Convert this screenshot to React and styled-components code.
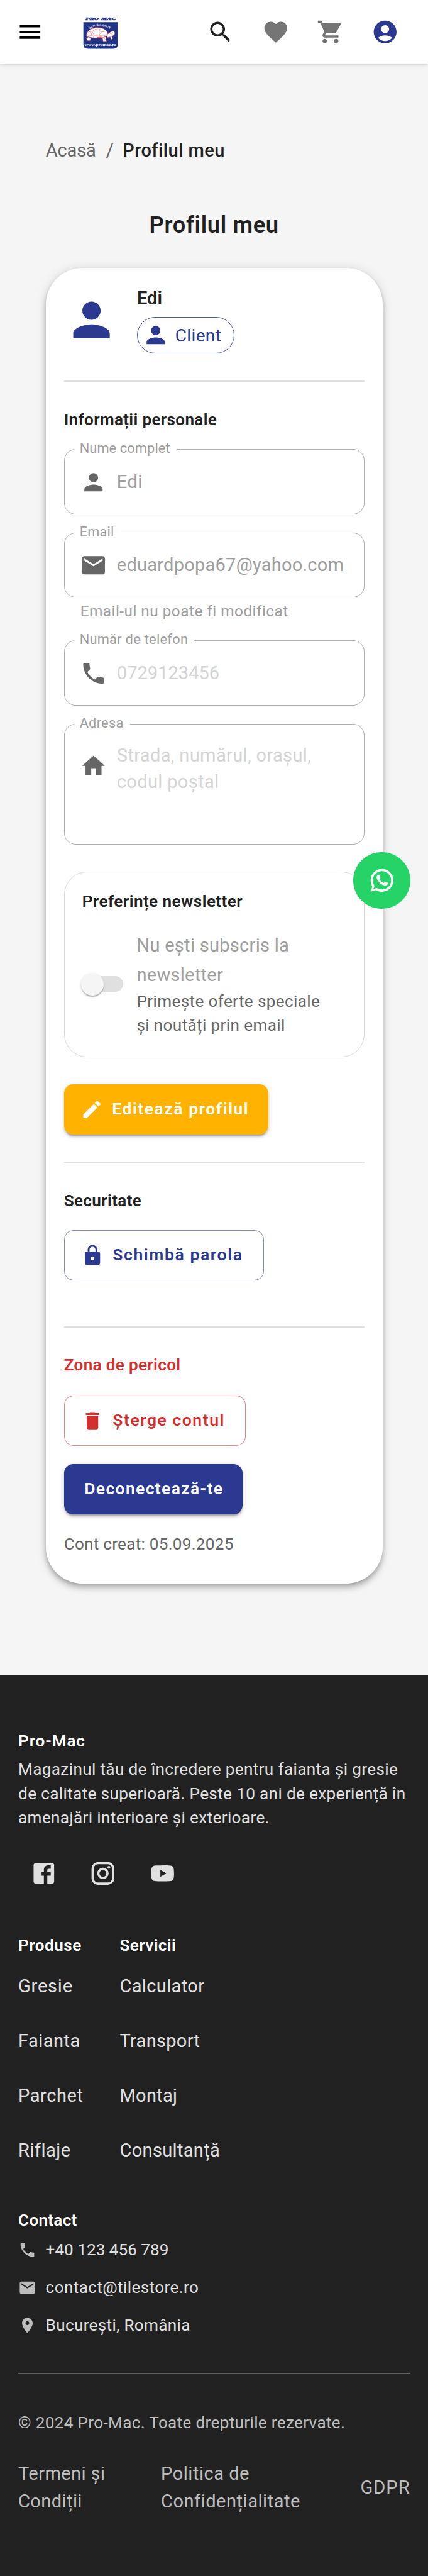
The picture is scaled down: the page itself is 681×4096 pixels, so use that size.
import React from "react";
import styled, { createGlobalStyle } from "styled-components";

/* 1rem = 10 design pixels */
const Global = createGlobalStyle`
  html { font-size: 18.158px; }
  body { margin: 0; background: #f5f5f5; font-family: Roboto, "Liberation Sans", sans-serif; font-weight: 450; }
  *, *::before, *::after { box-sizing: border-box; }
`;

const colors = {
  primary: "#2b3990",
  accent: "#ffb300",
  danger: "#d32f2f",
  text: "#212121",
  muted: "#666666",
  disabled: "#9e9e9e",
  line: "#e0e0e0",
};

const Page = styled.div`
  position: relative;
  width: 100%;
  height: 225.6rem;
  overflow: hidden;
  background: #f5f5f5;
  color: ${colors.text};
`;

const Svg = styled.svg`
  display: block;
  flex: none;
  width: ${(p) => p.$size / 10}rem;
  height: ${(p) => p.$size / 10}rem;
  fill: ${(p) => p.$color || "currentColor"};
`;

const paths = {
  menu: "M3 18h18v-2H3zm0-5h18v-2H3zm0-7v2h18V6z",
  search:
    "M15.5 14h-.79l-.28-.27C15.41 12.59 16 11.11 16 9.5 16 5.91 13.09 3 9.5 3S3 5.91 3 9.5 5.91 16 9.5 16c1.61 0 3.09-.59 4.23-1.57l.27.28v.79l5 4.99L20.49 19zm-6 0C7.01 14 5 11.99 5 9.5S7.01 5 9.5 5 14 7.01 14 9.5 11.99 14 9.5 14",
  heart:
    "m12 21.35-1.45-1.32C5.4 15.36 2 12.28 2 8.5 2 5.42 4.42 3 7.5 3c1.74 0 3.41.81 4.5 2.09C13.09 3.81 14.76 3 16.5 3 19.58 3 22 5.42 22 8.5c0 3.78-3.4 6.86-8.55 11.54z",
  cart:
    "M7 18c-1.1 0-1.99.9-1.99 2S5.9 22 7 22s2-.9 2-2-.9-2-2-2M1 2v2h2l3.6 7.59-1.35 2.45c-.16.28-.25.61-.25.96 0 1.1.9 2 2 2h12v-2H7.42c-.14 0-.25-.11-.25-.25l.03-.12.9-1.63h7.45c.75 0 1.41-.41 1.75-1.03l3.58-6.49c.08-.14.12-.31.12-.48 0-.55-.45-1-1-1H5.21l-.94-2zm16 16c-1.1 0-1.99.9-1.99 2s.89 2 1.99 2 2-.9 2-2-.9-2-2-2",
  account:
    "M12 2C6.48 2 2 6.48 2 12s4.48 10 10 10 10-4.48 10-10S17.52 2 12 2m0 4c1.93 0 3.5 1.57 3.5 3.5S13.93 13 12 13s-3.5-1.57-3.5-3.5S10.07 6 12 6m0 14c-2.03 0-4.43-.82-6.14-2.88C7.55 15.8 9.68 15 12 15s4.45.8 6.14 2.12C16.43 19.18 14.03 20 12 20",
  person:
    "M12 12c2.21 0 4-1.79 4-4s-1.79-4-4-4-4 1.79-4 4 1.79 4 4 4m0 2c-2.67 0-8 1.34-8 4v2h16v-2c0-2.66-5.33-4-8-4",
  mail:
    "M20 4H4c-1.1 0-1.99.9-1.99 2L2 18c0 1.1.9 2 2 2h16c1.1 0 2-.9 2-2V6c0-1.1-.9-2-2-2m0 4-8 5-8-5V6l8 5 8-5z",
  phone:
    "M6.62 10.79c1.44 2.83 3.76 5.14 6.59 6.59l2.2-2.2c.27-.27.67-.36 1.02-.24 1.12.37 2.33.57 3.57.57.55 0 1 .45 1 1V20c0 .55-.45 1-1 1-9.39 0-17-7.61-17-17 0-.55.45-1 1-1h3.5c.55 0 1 .45 1 1 0 1.25.2 2.45.57 3.57.11.35.03.74-.25 1.02z",
  home: "M10 20v-6h4v6h5v-8h3L12 3 2 12h3v8z",
  edit:
    "M3 17.25V21h3.75L17.81 9.94l-3.75-3.75zM20.71 7.04c.39-.39.39-1.02 0-1.41l-2.34-2.34a.996.996 0 0 0-1.41 0l-1.83 1.83 3.75 3.75z",
  lock:
    "M18 8h-1V6c0-2.76-2.24-5-5-5S7 3.24 7 6v2H6c-1.1 0-2 .9-2 2v10c0 1.1.9 2 2 2h12c1.1 0 2-.9 2-2V10c0-1.1-.9-2-2-2m-6 9c-1.1 0-2-.9-2-2s.9-2 2-2 2 .9 2 2-.9 2-2 2m3.1-9H8.9V6c0-1.71 1.39-3.1 3.1-3.1s3.1 1.39 3.1 3.1z",
  trash: "M6 19c0 1.1.9 2 2 2h8c1.1 0 2-.9 2-2V7H6zM19 4h-3.5l-1-1h-5l-1 1H5v2h14z",
  pin:
    "M12 2C8.13 2 5 5.13 5 9c0 5.25 7 13 7 13s7-7.75 7-13c0-3.87-3.13-7-7-7m0 9.5c-1.38 0-2.5-1.12-2.5-2.5s1.12-2.5 2.5-2.5 2.5 1.12 2.5 2.5-1.12 2.5-2.5 2.5",
  facebook:
    "M5 3h14a2 2 0 0 1 2 2v14a2 2 0 0 1-2 2H5a2 2 0 0 1-2-2V5a2 2 0 0 1 2-2m13 2h-2.5A3.5 3.5 0 0 0 12 8.5V11h-2v3h2v7h3v-7h3v-3h-3V9a1 1 0 0 1 1-1h2V5z",
  instagram:
    "M7.8 2h8.4C19.4 2 22 4.6 22 7.8v8.4a5.8 5.8 0 0 1-5.8 5.8H7.8C4.6 22 2 19.4 2 16.2V7.8A5.8 5.8 0 0 1 7.8 2m-.2 2A3.6 3.6 0 0 0 4 7.6v8.8C4 18.39 5.61 20 7.6 20h8.8a3.6 3.6 0 0 0 3.6-3.6V7.6C20 5.61 18.39 4 16.4 4H7.6m9.65 1.5a1.25 1.25 0 0 1 1.25 1.25A1.25 1.25 0 0 1 17.25 8 1.25 1.25 0 0 1 16 6.75a1.25 1.25 0 0 1 1.25-1.25M12 7a5 5 0 0 1 5 5 5 5 0 0 1-5 5 5 5 0 0 1-5-5 5 5 0 0 1 5-5m0 2a3 3 0 0 0-3 3 3 3 0 0 0 3 3 3 3 0 0 0 3-3 3 3 0 0 0-3-3z",
  youtube:
    "M10 15l5.19-3L10 9v6m11.56-7.83c.13.47.22 1.1.28 1.9.07.8.1 1.49.1 2.09L22 12c0 2.19-.16 3.8-.44 4.83-.25.9-.83 1.48-1.73 1.73-.47.13-1.33.22-2.65.28-1.3.07-2.49.1-3.59.1L12 19c-4.19 0-6.8-.16-7.83-.44-.9-.25-1.48-.83-1.73-1.73-.13-.47-.22-1.1-.28-1.9-.07-.8-.1-1.49-.1-2.09L2 12c0-2.19.16-3.8.44-4.83.25-.9.83-1.48 1.73-1.73.47-.13 1.33-.22 2.65-.28 1.3-.07 2.49-.1 3.59-.1L12 5c4.19 0 6.8.16 7.83.44.9.25 1.48.83 1.73 1.73z",
  whatsapp:
    "M16.75 13.96c.25.13.41.2.46.3.06.11.04.61-.21 1.18-.2.56-1.24 1.1-1.7 1.12-.46.02-.47.36-2.96-.73-2.49-1.09-3.99-3.75-4.11-3.92-.12-.17-.96-1.38-.92-2.61.05-1.22.69-1.8.95-2.04.24-.26.51-.29.68-.26h.47c.15 0 .36-.06.55.45l.69 1.87c.06.13.1.28.01.44l-.27.41-.39.42c-.12.12-.26.25-.12.5.12.26.62 1.09 1.32 1.78.91.88 1.71 1.17 1.95 1.3.24.14.39.12.54-.04l.81-.94c.19-.25.35-.19.58-.11l1.67.88M12 2a10 10 0 0 1 10 10 10 10 0 0 1-10 10c-1.97 0-3.8-.57-5.35-1.55L2 22l1.55-4.65A9.969 9.969 0 0 1 2 12 10 10 0 0 1 12 2m0 2a8 8 0 0 0-8 8c0 1.72.54 3.31 1.46 4.61L4.5 19.5l2.89-.96A7.95 7.95 0 0 0 12 20a8 8 0 0 0 8-8 8 8 0 0 0-8-8z",
};

const Icon = ({ name, size = 24, color }) => (
  <Svg viewBox="0 0 24 24" $size={size} $color={color} aria-hidden="true">
    <path d={paths[name]} fillRule="evenodd" />
  </Svg>
);

/* tracking is given in design pixels */
const Tracked = styled.span`
  letter-spacing: ${(p) => (p.$ls || 0) / 10}rem;
`;

const Header = styled.header`
  position: relative;
  display: flex;
  align-items: center;
  height: 5.6rem;
  padding: 0 2.54rem 0 1.42rem;
  background: #fff;
  box-shadow: 0 0.1rem 0.3rem rgba(0, 0, 0, 0.14);
`;
const LogoImage = styled.svg`
  display: block;
  width: 3.103rem;
  height: 2.836rem;
  margin: 0.25rem 0 0 3.45rem;
`;
const HeaderActions = styled.div`
  display: flex;
  gap: 2.41rem;
  margin-left: auto;
`;

const Logo = () => (
  <LogoImage viewBox="60 36 256 234" role="img" aria-label="Pro-Mac">
    <text x="78" y="60" fontFamily="Liberation Serif, serif" fontStyle="italic" fontWeight="700" fontSize="29" textLength="220" lengthAdjust="spacingAndGlyphs" fill="#1f3487" stroke="#1f3487" strokeWidth="2">
      PRO-MAC
    </text>
    <path d="M63 73h249v160q0 33-33 33H96q-33 0-33-33z" fill="#1f3487" />
    <path id="motto" d="M110 124C135 98 195 82 262 126" fill="none" />
    <text fontFamily="Liberation Serif, serif" fontWeight="700" fontSize="22" fill="#fff">
      <textPath href="#motto" textLength="156" lengthAdjust="spacingAndGlyphs">Încet, dar sigur!®</textPath>
    </text>
    <g fill="#fff" stroke="#ee4a52" strokeWidth="2.6" strokeLinejoin="round">
      <path d="M100 180l-14 12 8 15h17l5-18zM200 182l6 30h24l-6-14 4-18zM252 172l14 26 8-4-8-28z" />
      <path d="M236 160c14-2 20-22 42-21 14 1 16 16 8 25-12 13-32 18-50 20z" />
      <path d="M86 168c4-32 32-56 76-56 42 0 72 18 78 46 0 12-16 22-38 26-36 5-66 5-90-1-16-3-26-5-26-15z" />
      <path d="M88 162c24 12 108 22 148 0M124 122l-12 18 14 28M112 140l-22 16M152 112l-28 11M126 140l22-14 30 2 14 18-16 20-36 2zM192 146l34-8M178 128l16-12M176 166l22 14M140 168l-6 16M112 140h14" fill="none" />
      <path d="M160 184l30-4 6 10-22-2zM104 192l8-6M210 190l10 6M256 156l14 2" fill="#ee4a52" />
    </g>
    <circle cx="274" cy="150" r="3" fill="#333" />
    <text x="73" y="247" fontFamily="Liberation Serif, serif" fontWeight="700" fontSize="27" textLength="228" lengthAdjust="spacingAndGlyphs" fill="#fff">
      www.promac.ro
    </text>
  </LogoImage>
);

const Main = styled.main`
  height: 141.11rem;
  padding: 6.43rem 3.98rem 0 4rem;
`;
const Breadcrumbs = styled.nav`
  display: flex;
  font-size: 1.6rem;
  line-height: 2.4rem;
  color: ${colors.muted};
`;
const Crumb = styled.span`
  letter-spacing: ${(p) => (p.$current ? 0.022 : -0.007)}rem;
  color: ${(p) => (p.$current ? colors.text : "inherit")};
  font-weight: ${(p) => (p.$current ? 500 : 450)};
`;
const Slash = styled.span`
  margin: 0 0.8rem 0 0.88rem;
`;
const PageTitle = styled.h1`
  margin: 3.67rem 0 2.15rem;
  text-align: center;
  font-size: 2rem;
  line-height: 3.2rem;
  font-weight: 650;
  letter-spacing: 0.037rem;
`;
const Card = styled.section`
  width: 29.52rem;
  height: 115.25rem;
  padding: 1.6rem;
  border-radius: 3.2rem;
  background: #fff;
  box-shadow:
    0 0.2rem 0.4rem -0.1rem rgba(0, 0, 0, 0.2),
    0 0.4rem 0.5rem 0 rgba(0, 0, 0, 0.14),
    0 0.1rem 1rem 0 rgba(0, 0, 0, 0.12);
`;
const ProfileHead = styled.div`
  display: flex;
  align-items: center;
  gap: 1.6rem;
  height: 5.92rem;
`;
const Name = styled.div`
  font-size: 1.6rem;
  line-height: 2.1rem;
  font-weight: 600;
  letter-spacing: 0.006rem;
  margin-bottom: 0.61rem;
`;
const Chip = styled.div`
  display: flex;
  align-items: center;
  width: 8.55rem;
  height: 3.21rem;
  padding-left: 0.4rem;
  gap: 0.5rem;
  border: 0.1rem solid rgba(43, 57, 144, 0.85);
  border-radius: 1.6rem;
  color: ${colors.primary};
  font-size: 1.54rem;
  letter-spacing: 0.02rem;
`;
const Divider = styled.hr`
  height: 0.1rem;
  margin: ${(p) => p.$top / 10}rem 0 0;
  border: 0;
  background: ${(p) => p.$color || colors.line};
`;
const SectionTitle = styled.h2`
  margin: ${(p) => (p.$top ?? 22.3) / 10}rem 0 0;
  font-size: 1.44rem;
  line-height: 2.2rem;
  font-weight: 600;
  color: ${(p) => p.$color || "inherit"};
  letter-spacing: ${(p) => (p.$ls ?? 0.18) / 10}rem;
`;
const Fields = styled.div`
  display: flex;
  flex-direction: column;
  gap: 1.6rem;
  margin-top: 1.47rem;
`;
const InputBox = styled.div`
  position: relative;
  display: flex;
  align-items: ${(p) => (p.$multiline ? "flex-start" : "center")};
  gap: 0.84rem;
  height: ${(p) => (p.$multiline ? 10.57 : 5.7)}rem;
  padding: ${(p) => (p.$multiline ? "1.6rem 1.34rem" : "0.06rem 1.34rem 0")};
  border: 0.1rem solid #acacac;
  border-radius: 1rem;
  color: #666;
`;
const FieldLabel = styled.label`
  position: absolute;
  top: -0.95rem;
  left: 0.82rem;
  padding: 0 0.56rem 0 0.5rem;
  background: #fff;
  color: ${colors.disabled};
  font-size: 1.2rem;
  line-height: 1.7rem;
`;
const FieldValue = styled.div`
  font-size: 1.6rem;
  line-height: 2.3rem;
  color: ${(p) => (p.$placeholder ? "#d4d4d4" : colors.disabled)};
  letter-spacing: ${(p) => p.$ls / 10}rem;
  white-space: pre-line;
`;
const AddressIcon = styled.div`
  padding-top: 0.83rem;
`;
const Helper = styled.div`
  margin: 0.25rem 1.43rem 0;
  padding-bottom: 0.05rem;
  font-size: 1.34rem;
  line-height: 1.84rem;
  letter-spacing: 0.027rem;
  color: ${colors.disabled};
  white-space: nowrap;
`;

const Field = ({ label, labelLs, icon, value, placeholder, ls, helper, multiline }) => (
  <div>
    <InputBox $multiline={multiline}>
      <FieldLabel>
        <Tracked $ls={labelLs}>{label}</Tracked>
      </FieldLabel>
      {multiline ? (
        <AddressIcon>
          <Icon name={icon} />
        </AddressIcon>
      ) : (
        <Icon name={icon} />
      )}
      <FieldValue $placeholder={!value} $ls={ls}>
        {value || placeholder}
      </FieldValue>
    </InputBox>
    {helper && <Helper>{helper}</Helper>}
  </div>
);

const NewsletterBox = styled.div`
  height: 16.25rem;
  margin-top: 2.36rem;
  padding: 1.54rem;
  border: 0.1rem solid #d8d8d8;
  border-radius: 2rem;
`;
const SwitchRow = styled.div`
  display: flex;
  align-items: center;
  margin-top: 1.4rem;
`;
const Track = styled.div`
  display: flex;
  align-items: center;
  width: 3.4rem;
  height: 1.36rem;
  margin: 0 1.18rem 0 0.2rem;
  border-radius: 0.7rem;
  background: ${colors.line};
`;
const Thumb = styled.div`
  flex: none;
  width: 2rem;
  height: 2rem;
  margin-left: -0.3rem;
  border-radius: 50%;
  background: #f5f5f5;
  box-shadow:
    0 0.2rem 0.1rem -0.1rem rgba(0, 0, 0, 0.2),
    0 0.1rem 0.1rem 0 rgba(0, 0, 0, 0.14),
    0 0.1rem 0.3rem 0 rgba(0, 0, 0, 0.12);
`;
const SwitchTitle = styled.div`
  font-size: 1.6rem;
  line-height: 2.57rem;
  letter-spacing: 0.015rem;
  color: ${colors.disabled};
`;
const SwitchNote = styled.div`
  font-size: 1.44rem;
  line-height: 2.11rem;
  letter-spacing: 0.02rem;
  color: ${colors.muted};
`;

const buttonLooks = {
  accent: `background:${colors.accent};color:#fff;`,
  primary: `background:${colors.primary};color:#fff;`,
  outlined: `color:${colors.primary};border:0.1rem solid rgba(43,57,144,.6);`,
  danger: `color:${colors.danger};border:0.1rem solid rgba(211,47,47,.6);`,
};
const Button = styled.button`
  display: flex;
  align-items: center;
  gap: 0.78rem;
  width: ${(p) => p.$width / 10}rem;
  height: 4.4rem;
  margin: ${(p) => p.$top / 10}rem 0 0;
  padding: 0 0 0 ${(p) => p.$pad / 10}rem;
  border: 0;
  border-radius: 0.8rem;
  background: transparent;
  font: 600 1.46rem/2.4rem Roboto, sans-serif;
  letter-spacing: ${(p) => p.$ls / 10}rem;
  white-space: nowrap;
  ${(p) => buttonLooks[p.$look]}
  ${(p) =>
    (p.$look === "accent" || p.$look === "primary") &&
    `box-shadow: 0 0.3rem 0.1rem -0.2rem rgba(0,0,0,.2), 0 0.2rem 0.2rem 0 rgba(0,0,0,.14), 0 0.1rem 0.5rem 0 rgba(0,0,0,.12);`}
`;
const ButtonLabel = styled.span`
  padding-bottom: 0.1rem;
`;
const Created = styled.div`
  margin-top: 1.58rem;
  font-size: 1.44rem;
  line-height: 2.1rem;
  letter-spacing: 0.014rem;
  color: ${colors.muted};
`;

const Fab = styled.a`
  position: absolute;
  top: 74.63rem;
  right: 1.57rem;
  display: grid;
  place-items: center;
  width: 4.97rem;
  height: 4.97rem;
  border-radius: 50%;
  background: #25d366;
  color: #fff;
`;

const Footer = styled.footer`
  height: 78.89rem;
  padding: 4.66rem 1.56rem 0 1.6rem;
  background: #212121;
  color: #e0e0e0;
`;
const Description = styled.p`
  margin: 0.33rem -1rem 0 0;
  padding-right: 0.8rem;
  font-size: 1.44rem;
  line-height: 2.106rem;
  letter-spacing: 0.0195rem;
`;
const Socials = styled.div`
  display: flex;
  gap: 2.8rem;
  padding: 2.64rem 0 0 1.04rem;
`;
const LinkColumns = styled.div`
  display: flex;
  margin-top: 4.02rem;
`;
const LinkColumn = styled.div`
  width: ${(p) => p.$width / 10}rem;
`;
const FooterLink = styled.a`
  display: block;
  font-size: 1.6rem;
  line-height: 4.8rem;
  letter-spacing: ${(p) => p.$ls / 10}rem;

  &:first-of-type {
    margin-top: 0.07rem;
  }
`;
const ContactList = styled.div`
  display: flex;
  flex-direction: column;
  gap: 1.2rem;
  margin-top: 0.4rem;
`;
const ContactRow = styled.div`
  display: flex;
  align-items: center;
  gap: 0.8rem;
  font-size: 1.44rem;
  line-height: 2.1rem;
`;
const Copyright = styled.div`
  margin-top: 3.22rem;
  font-size: 1.44rem;
  line-height: 2.1rem;
  letter-spacing: 0.018rem;
  color: #bdbdbd;
`;
const Legal = styled.div`
  display: grid;
  grid-template-columns: 12.5rem 1fr auto;
  align-items: center;
  margin-top: 2.24rem;
  font-size: 1.6rem;
  line-height: 2.41rem;
  color: #bdbdbd;
`;

export default function App() {
  return (
    <Page>
      <Global />
      <Header>
        <Icon name="menu" color="#000" />
        <Logo />
        <HeaderActions>
          <Icon name="search" color={colors.text} />
          <Icon name="heart" color="#757575" />
          <Icon name="cart" color="#757575" />
          <Icon name="account" color={colors.primary} />
        </HeaderActions>
      </Header>

      <Main>
        <Breadcrumbs>
          <Crumb>Acasă</Crumb>
          <Slash>/</Slash>
          <Crumb $current>Profilul meu</Crumb>
        </Breadcrumbs>
        <PageTitle>Profilul meu</PageTitle>

        <Card>
          <ProfileHead>
            <Icon name="person" size={48} color={colors.primary} />
            <div>
              <Name>Edi</Name>
              <Chip>
                <Icon name="person" />
                Client
              </Chip>
            </div>
          </ProfileHead>
          <Divider $top={23.7} />

          <SectionTitle>Informații personale</SectionTitle>
          <Fields>
            <Field label="Nume complet" labelLs={0.07} icon="person" value="Edi" ls={0.25} />
            <Field
              label="Email"
              labelLs={0.1}
              icon="mail"
              value="eduardpopa67@yahoo.com"
              ls={0.12}
              helper="Email-ul nu poate fi modificat"
            />
            <Field label="Număr de telefon" labelLs={0.16} icon="phone" placeholder="0729123456" ls={0} />
            <Field
              label="Adresa"
              labelLs={0.15}
              icon="home"
              placeholder={"Strada, numărul, orașul,\ncodul poștal"}
              ls={0.18}
              multiline
            />
          </Fields>

          <NewsletterBox>
            <SectionTitle $top={0} $ls={0.24}>Preferințe newsletter</SectionTitle>
            <SwitchRow>
              <Track>
                <Thumb />
              </Track>
              <div>
                <SwitchTitle>
                  Nu ești subscris la
                  <br />
                  newsletter
                </SwitchTitle>
                <SwitchNote>
                  Primește oferte speciale
                  <br />
                  și noutăți prin email
                </SwitchNote>
              </div>
            </SwitchRow>
          </NewsletterBox>

          <Button $look="accent" $width={179.3} $top={24} $pad={14.4} $ls={0.84}>
            <Icon name="edit" size={20} />
            <ButtonLabel>Editează profilul</ButtonLabel>
          </Button>
          <Divider $top={24} />

          <SectionTitle $ls={0.19}>Securitate</SectionTitle>
          <Button $look="outlined" $width={175.2} $top={14.5} $pad={14.4} $ls={0.88}>
            <Icon name="lock" size={20} />
            <ButtonLabel>Schimbă parola</ButtonLabel>
          </Button>
          <Divider $top={40} />

          <SectionTitle $color={colors.danger}>Zona de pericol</SectionTitle>
          <Button $look="danger" $width={159.2} $top={15.3} $pad={14.4} $ls={0.84}>
            <Icon name="trash" size={20} />
            <ButtonLabel>Șterge contul</ButtonLabel>
          </Button>
          <Button $look="primary" $width={156.8} $top={16} $pad={17.9} $ls={0.74}>
            <ButtonLabel>Deconectează-te</ButtonLabel>
          </Button>
          <Created>Cont creat: 05.09.2025</Created>
        </Card>
      </Main>

      <Footer>
        <SectionTitle $top={0} $ls={0.48} $color="#fff">Pro-Mac</SectionTitle>
        <Description>
          Magazinul tău de încredere pentru faianta și gresie de calitate superioară. Peste 10 ani de
          experiență în amenajări interioare și exterioare.
        </Description>
        <Socials>
          <Icon name="facebook" />
          <Icon name="instagram" />
          <Icon name="youtube" />
        </Socials>

        <LinkColumns>
          <LinkColumn $width={88.9}>
            <SectionTitle $top={0} $ls={0.27} $color="#fff">Produse</SectionTitle>
            <FooterLink $ls={0.42}>Gresie</FooterLink>
            <FooterLink $ls={0.25}>Faianta</FooterLink>
            <FooterLink $ls={0.3}>Parchet</FooterLink>
            <FooterLink $ls={0.25}>Riflaje</FooterLink>
          </LinkColumn>
          <LinkColumn $width={150}>
            <SectionTitle $top={0} $ls={0.2} $color="#fff">Servicii</SectionTitle>
            <FooterLink $ls={0.19}>Calculator</FooterLink>
            <FooterLink $ls={0.15}>Transport</FooterLink>
            <FooterLink $ls={0.15}>Montaj</FooterLink>
            <FooterLink $ls={0.17}>Consultanță</FooterLink>
          </LinkColumn>
        </LinkColumns>

        <SectionTitle $top={26.2} $ls={0.15} $color="#fff">Contact</SectionTitle>
        <ContactList>
          <ContactRow>
            <Icon name="phone" size={16} color="#bdbdbd" />
            <Tracked $ls={0}>+40 123 456 789</Tracked>
          </ContactRow>
          <ContactRow>
            <Icon name="mail" size={16} color="#bdbdbd" />
            <Tracked $ls={0.21}>contact@tilestore.ro</Tracked>
          </ContactRow>
          <ContactRow>
            <Icon name="pin" size={16} color="#bdbdbd" />
            <Tracked $ls={0.18}>București, România</Tracked>
          </ContactRow>
        </ContactList>
        <Divider $top={31.3} $color="#616161" />

        <Copyright>© 2024 Pro-Mac. Toate drepturile rezervate.</Copyright>
        <Legal>
          <Tracked $ls={0.22}>
            Termeni și
            <br />
            Condiții
          </Tracked>
          <Tracked $ls={0.28}>
            Politica de
            <br />
            Confidențialitate
          </Tracked>
          <Tracked $ls={0.58}>GDPR</Tracked>
        </Legal>
      </Footer>

      <Fab aria-label="WhatsApp">
        <Icon name="whatsapp" />
      </Fab>
    </Page>
  );
}
